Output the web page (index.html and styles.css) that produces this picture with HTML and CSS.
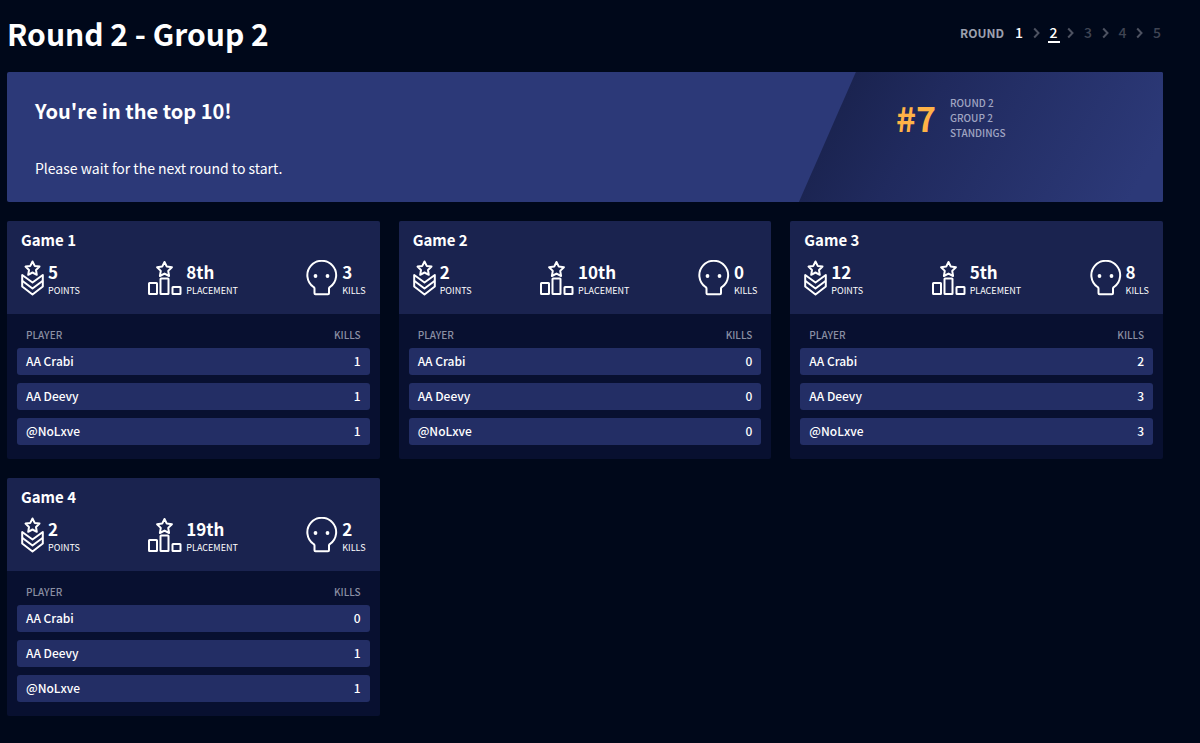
FILE: index.html
```html
<!DOCTYPE html>
<html lang="en">
<head>
    <meta charset="UTF-8">
    <meta name="viewport" content="width=device-width, initial-scale=1.0">
    <title>Round 2 - Group 2</title>
    <link rel="stylesheet" href="styles.css">
</head>
<body>
    <!-- Shared icons -->
    <svg class="icon-defs" aria-hidden="true">
        <symbol id="icon-points" viewBox="0 0 23 36">
            <path d="M11.500 1.500l2.200 4.400 4.800.7-3.500 3.400.8 4.800-4.300-2.300-4.300 2.300.8-4.800-3.500-3.400 4.800-.7z"/>
            <path d="M1.200 15v11.500l10.300 8 10.300-8v-11.500l-10.300 7.500z"/>
            <path d="M1.200 20.800l10.300 7.700 10.300-7.700"/>
        </symbol>
        <symbol id="icon-placement" viewBox="0 0 34 36">
            <path d="M16.500 2l2.300 4.600 5.100.7-3.700 3.600.9 5.100-4.600-2.400-4.600 2.400.9-5.100-3.700-3.600 5.100-.7z"/>
            <rect x="1" y="23" width="8" height="11" rx=".5"/>
            <rect x="12.500" y="18.500" width="8" height="15.500" rx=".5"/>
            <rect x="24.500" y="27" width="8" height="7" rx=".5"/>
        </symbol>
        <symbol id="icon-kills" viewBox="0 0 32 36">
            <path d="M9.500 34.200h12.500q1 0 1-1v-4.700q0-1 1-1.500a14.400 14.400 0 1 0-16.500 0q1 .5 1 1.500v4.700q0 1 1 1z"/>
            <circle class="fill" cx="9.500" cy="16" r="1.900"/>
            <circle class="fill" cx="21.500" cy="16" r="1.900"/>
        </symbol>
        <symbol id="icon-chevron" viewBox="0 0 7 12">
            <path d="M1.200 1.500l4.300 4.500-4.300 4.500"/>
        </symbol>
    </svg>

    <header class="page-header">
        <h1>Round 2 - Group 2</h1>
        <nav class="rounds">
            <span class="rounds-label">ROUND</span>
            <div class="rounds-list">
                <a href="#" class="done">1</a>
                <svg class="chevron"><use href="#icon-chevron"/></svg>
                <a href="#" class="current">2</a>
                <svg class="chevron"><use href="#icon-chevron"/></svg>
                <a href="#">3</a>
                <svg class="chevron"><use href="#icon-chevron"/></svg>
                <a href="#">4</a>
                <svg class="chevron"><use href="#icon-chevron"/></svg>
                <a href="#">5</a>
            </div>
        </nav>
    </header>

    <section class="banner">
        <div class="banner-text">
            <h2>You're in the top 10!</h2>
            <p>Please wait for the next round to start.</p>
        </div>
        <div class="standing">
            <span class="rank">#7</span>
            <span class="rank-label">ROUND 2<br>GROUP 2<br>STANDINGS</span>
        </div>
    </section>

    <main class="games">
        <section class="game">
            <div class="game-head">
                <h3>Game 1</h3>
                <div class="stats">
                    <div class="stat">
                        <svg class="icon points"><use href="#icon-points"/></svg>
                        <div><strong>5</strong><span>POINTS</span></div>
                    </div>
                    <div class="stat">
                        <svg class="icon placement"><use href="#icon-placement"/></svg>
                        <div><strong>8th</strong><span>PLACEMENT</span></div>
                    </div>
                    <div class="stat">
                        <svg class="icon kills"><use href="#icon-kills"/></svg>
                        <div><strong>3</strong><span>KILLS</span></div>
                    </div>
                </div>
            </div>
            <div class="game-body">
                <table>
                    <thead><tr><th>PLAYER</th><th>KILLS</th></tr></thead>
                    <tbody>
                        <tr><td>AA Crabi</td><td>1</td></tr>
                        <tr><td>AA Deevy</td><td>1</td></tr>
                        <tr><td>@NoLxve</td><td>1</td></tr>
                    </tbody>
                </table>
            </div>
        </section>

        <section class="game">
            <div class="game-head">
                <h3>Game 2</h3>
                <div class="stats">
                    <div class="stat">
                        <svg class="icon points"><use href="#icon-points"/></svg>
                        <div><strong>2</strong><span>POINTS</span></div>
                    </div>
                    <div class="stat">
                        <svg class="icon placement"><use href="#icon-placement"/></svg>
                        <div><strong>10th</strong><span>PLACEMENT</span></div>
                    </div>
                    <div class="stat">
                        <svg class="icon kills"><use href="#icon-kills"/></svg>
                        <div><strong>0</strong><span>KILLS</span></div>
                    </div>
                </div>
            </div>
            <div class="game-body">
                <table>
                    <thead><tr><th>PLAYER</th><th>KILLS</th></tr></thead>
                    <tbody>
                        <tr><td>AA Crabi</td><td>0</td></tr>
                        <tr><td>AA Deevy</td><td>0</td></tr>
                        <tr><td>@NoLxve</td><td>0</td></tr>
                    </tbody>
                </table>
            </div>
        </section>

        <section class="game">
            <div class="game-head">
                <h3>Game 3</h3>
                <div class="stats">
                    <div class="stat">
                        <svg class="icon points"><use href="#icon-points"/></svg>
                        <div><strong>12</strong><span>POINTS</span></div>
                    </div>
                    <div class="stat">
                        <svg class="icon placement"><use href="#icon-placement"/></svg>
                        <div><strong>5th</strong><span>PLACEMENT</span></div>
                    </div>
                    <div class="stat">
                        <svg class="icon kills"><use href="#icon-kills"/></svg>
                        <div><strong>8</strong><span>KILLS</span></div>
                    </div>
                </div>
            </div>
            <div class="game-body">
                <table>
                    <thead><tr><th>PLAYER</th><th>KILLS</th></tr></thead>
                    <tbody>
                        <tr><td>AA Crabi</td><td>2</td></tr>
                        <tr><td>AA Deevy</td><td>3</td></tr>
                        <tr><td>@NoLxve</td><td>3</td></tr>
                    </tbody>
                </table>
            </div>
        </section>

        <section class="game">
            <div class="game-head">
                <h3>Game 4</h3>
                <div class="stats">
                    <div class="stat">
                        <svg class="icon points"><use href="#icon-points"/></svg>
                        <div><strong>2</strong><span>POINTS</span></div>
                    </div>
                    <div class="stat">
                        <svg class="icon placement"><use href="#icon-placement"/></svg>
                        <div><strong>19th</strong><span>PLACEMENT</span></div>
                    </div>
                    <div class="stat">
                        <svg class="icon kills"><use href="#icon-kills"/></svg>
                        <div><strong>2</strong><span>KILLS</span></div>
                    </div>
                </div>
            </div>
            <div class="game-body">
                <table>
                    <thead><tr><th>PLAYER</th><th>KILLS</th></tr></thead>
                    <tbody>
                        <tr><td>AA Crabi</td><td>0</td></tr>
                        <tr><td>AA Deevy</td><td>1</td></tr>
                        <tr><td>@NoLxve</td><td>1</td></tr>
                    </tbody>
                </table>
            </div>
        </section>
    </main>
</body>
</html>
```

FILE: styles.css
```css
* {
    box-sizing: border-box;
}

body {
    margin: 0;
    padding: 0 37px 28px 7px;
    background-color: #00081a;
    color: #fff;
    font-family: "Noto Sans CJK JP", "Noto Sans", sans-serif;
    font-size: 12px;
    font-weight: 500;
}

h1, h2, h3, p {
    margin: 0;
}

.icon-defs {
    display: none;
}

/* Header */
.page-header {
    display: flex;
    justify-content: space-between;
    align-items: center;
    height: 72px;
    padding-bottom: 6px;
}

h1 {
    font-size: 30px;
    font-weight: 600;
    line-height: 40px;
}

.rounds {
    display: flex;
    align-items: center;
    gap: 9px;
}

.rounds-label {
    color: #9ca0ae;
    font-size: 12px;
    font-weight: 700;
    line-height: 18px;
}

.rounds-list {
    display: flex;
    justify-content: space-between;
    align-items: center;
    width: 150px;
}

.rounds-list a {
    width: 12px;
    border-bottom: 2px solid transparent;
    color: #3f4453;
    font-size: 14px;
    line-height: 18px;
    text-align: center;
    text-decoration: none;
}

.rounds-list .done {
    color: #fff;
}

.rounds-list .current {
    border-color: #fff;
    color: #fff;
}

.chevron {
    width: 7px;
    height: 12px;
    fill: none;
    stroke: #4d5261;
    stroke-width: 2;
}

/* Banner */
.banner {
    display: flex;
    justify-content: space-between;
    min-height: 130px;
    margin-bottom: 19px;
    border-radius: 2px;
    overflow: hidden;
    background-color: #2c3978;
}

.banner-text {
    padding: 23px 28px 21px;
}

h2 {
    margin-bottom: 30px;
    font-size: 20px;
    font-weight: 600;
    line-height: 32px;
}

.banner-text p {
    font-size: 14px;
    font-weight: 400;
    line-height: 22px;
}

.standing {
    display: flex;
    align-items: flex-start;
    gap: 14px;
    width: 31.5%;
    padding: 23px 0 0 97px;
    background: linear-gradient(120deg, #1a234f 12%, #202a5e 35%, #2c3978 92%);
    clip-path: polygon(57px 0, 100% 0, 100% 100%, 0 100%);
}

.rank {
    color: #ffb347;
    font-size: 34px;
    font-weight: 700;
    line-height: 45px;
}

.rank-label {
    color: #a0a5c2;
    font-size: 10px;
    line-height: 15px;
}

/* Games */
.games {
    display: grid;
    grid-template-columns: repeat(3, 1fr);
    gap: 19px;
}

.game {
    border-radius: 2px;
    overflow: hidden;
    background-color: #081030;
}

.game-head {
    padding: 8px 14px 16px;
    background-color: #1a234f;
}

h3 {
    margin-bottom: 9px;
    font-size: 15px;
    font-weight: 600;
    line-height: 22px;
}

.stats {
    display: flex;
    justify-content: space-between;
}

.stat {
    display: flex;
    gap: 4px;
}

.stat strong,
.stat span {
    display: block;
}

.stat strong {
    font-size: 17px;
    line-height: 24px;
}

.stat span {
    font-size: 9px;
    font-weight: 400;
    line-height: 14px;
}

.icon {
    height: 36px;
    fill: none;
    stroke: #fff;
    stroke-width: 2;
    stroke-linejoin: round;
}

.fill {
    fill: #fff;
    stroke: none;
}

.points {
    width: 23px;
}

.placement {
    width: 34px;
}

.kills {
    width: 32px;
}

.game-body {
    padding: 0 10px 6px;
}

table {
    width: 100%;
    border-spacing: 0 8px;
}

th {
    padding: 8px 9px 0;
    color: #8a8fa3;
    font-size: 10px;
    font-weight: 500;
    line-height: 10px;
    text-align: left;
}

td {
    padding: 3px 9px 4px;
    background-color: #232e65;
    font-size: 12px;
    line-height: 20px;
}

td:first-child {
    border-radius: 3px 0 0 3px;
}

td:last-child {
    border-radius: 0 3px 3px 0;
}

th:last-child,
td:last-child {
    text-align: right;
}
```
